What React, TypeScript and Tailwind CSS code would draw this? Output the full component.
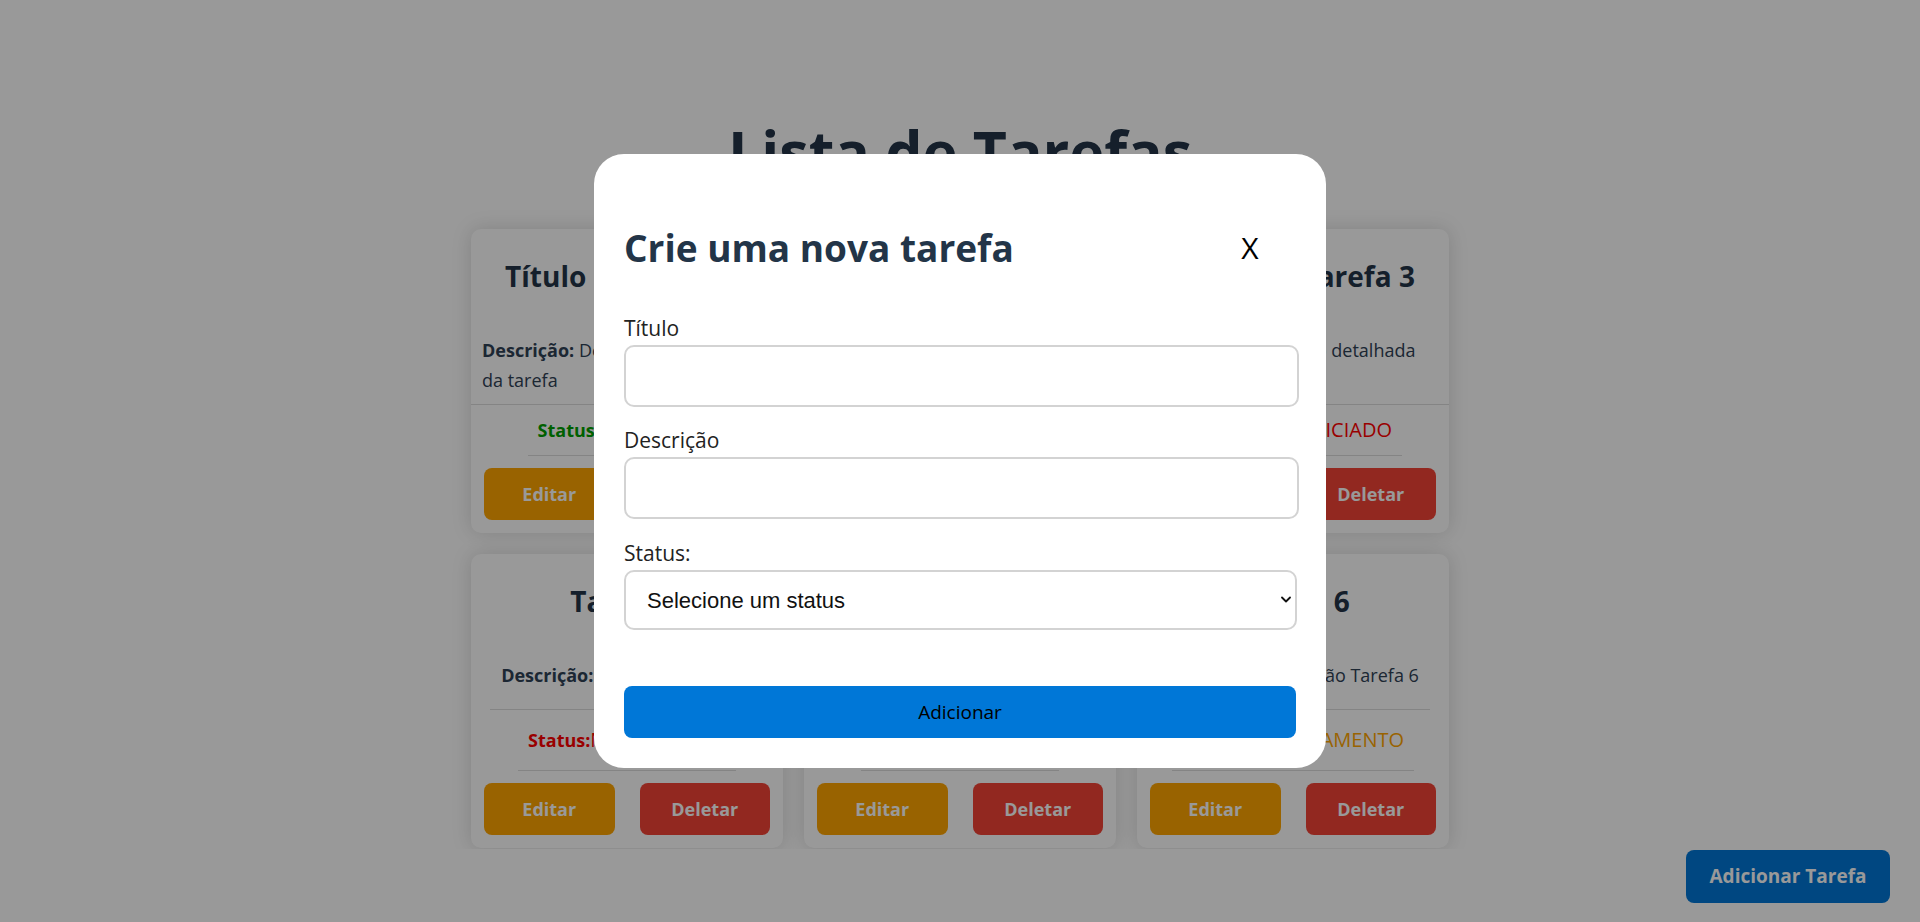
import { useState } from "react";

type Task = {
  id: number;
  title: string;
  description: string;
  status: "CONCLUÍDO" | "EM ANDAMENTO" | "NÃO INICIADO";
};

const tasks: Task[] = [
  { id: 1, title: "Título da Tarefa 1", description: "Descrição detalhada da tarefa", status: "CONCLUÍDO" },
  { id: 2, title: "Título da Tarefa 2", description: "Descrição detalhada da tarefa", status: "EM ANDAMENTO" },
  { id: 3, title: "Título da Tarefa 3", description: "Descrição detalhada da tarefa", status: "NÃO INICIADO" },
  { id: 4, title: "Tarefa 4", description: "Descrição Tarefa 4", status: "NÃO INICIADO" },
  { id: 5, title: "Tarefa 5", description: "Descrição Tarefa 5", status: "CONCLUÍDO" },
  { id: 6, title: "Tarefa 6", description: "Descrição Tarefa 6", status: "EM ANDAMENTO" },
];

const statusColor: Record<Task["status"], string> = {
  "CONCLUÍDO": "text-[#00a000]",
  "EM ANDAMENTO": "text-[#ffa500]",
  "NÃO INICIADO": "text-[#ff0000]",
};

function TaskCard({ task }: { task: Task }) {
  return (
    <div className="flex min-h-[294px] flex-col items-center rounded-[10px] bg-white pb-[13px] pt-[29px] shadow-[0_0_20px_rgba(0,0,0,0.15)]">
      <h3 className="text-center text-[28px] font-bold leading-[36px] text-[#233548]">
        {task.title}
      </h3>

      <p className="mt-[31px] grow border-b border-[#dddddd] px-[11px] pb-[9px] pt-[10px] text-[18px] leading-[30px] text-[#2f4155]">
        <strong className="font-bold">Descrição:</strong> {task.description}
      </p>

      <div
        className={
          "mt-[10px] flex grow items-center border-b border-[#dddddd] px-[10px] pb-[10px] leading-[30px] " +
          statusColor[task.status]
        }
      >
        <span className="text-[18px] font-bold">Status:</span>
        <span className="text-[20px]">{task.status}</span>
      </div>

      <div className="mt-[12px] flex w-full gap-[25px] px-[13px]">
        <button className="h-[52px] flex-1 rounded-[8px] bg-[#ffa500] text-[18px] font-bold text-white">
          Editar
        </button>
        <button className="h-[52px] flex-1 rounded-[8px] bg-[#f44336] text-[18px] font-bold text-white">
          Deletar
        </button>
      </div>
    </div>
  );
}

export default function App() {
  const [title, setTitle] = useState("");
  const [description, setDescription] = useState("");
  const [status, setStatus] = useState("");

  return (
    <div className="min-h-screen bg-white font-['Open_Sans',sans-serif]">
      <div className="flex flex-col items-center pt-[122px]">
        <h1 className="text-[59px] font-bold leading-[59px] text-[#233548]">Lista de Tarefas</h1>

        <div className="mt-[28px] h-[640px] overflow-hidden px-[20px] pt-[20px]">
          <div className="grid w-[978px] grid-cols-3 gap-[21px]">
            {tasks.map((t) => (
              <TaskCard key={t.id} task={t} />
            ))}
          </div>
        </div>
      </div>

      <button className="fixed bottom-[19px] right-[30px] h-[53px] w-[204px] rounded-[8px] bg-[#0077d7] text-[19px] font-bold text-white">
        Adicionar Tarefa
      </button>

      {/* Modal: nova tarefa */}
      <div className="fixed inset-0 z-50 flex items-center justify-center bg-black/40">
        <div className="w-[732px] rounded-[30px] bg-white px-[30px] pb-[30px] pt-[71px]">
          <div className="flex items-center justify-between">
            <h2 className="text-[37px] font-bold leading-[46px] text-[#233548]">Crie uma nova tarefa</h2>
            <button className="mr-[26px] w-[40px] text-center text-[30px] leading-[36px] text-black">X</button>
          </div>

          <div className="mt-[44px]">
            <label className="block text-[21px] leading-[26px] text-[#222222]">Título</label>
            <input
              value={title}
              onChange={(e) => setTitle(e.target.value)}
              className="mt-[4px] block h-[62px] w-[675px] rounded-[10px] border-2 border-[#d3d3d3] bg-white px-[20px] text-[20px] outline-none"
            />
          </div>

          <div className="mt-[20px]">
            <label className="block text-[21px] leading-[26px] text-[#222222]">Descrição</label>
            <input
              value={description}
              onChange={(e) => setDescription(e.target.value)}
              className="mt-[4px] block h-[62px] w-[675px] rounded-[10px] border-2 border-[#d3d3d3] bg-white px-[20px] text-[20px] outline-none"
            />
          </div>

          <div className="mt-[21px]">
            <label className="block text-[21px] leading-[26px] text-[#222222]">Status:</label>
            <div className="relative mt-[4px] w-[673px]">
              <select
                value={status}
                onChange={(e) => setStatus(e.target.value)}
                className="block h-[60px] w-full appearance-none rounded-[10px] border-2 border-[#d3d3d3] bg-white pl-[21px] font-['Liberation_Sans',Arial,sans-serif] text-[22px] text-[#111111] outline-none"
              >
                <option value="">Selecione um status</option>
                <option value="NÃO INICIADO">Não iniciado</option>
                <option value="EM ANDAMENTO">Em andamento</option>
                <option value="CONCLUÍDO">Concluído</option>
              </select>
              <svg
                className="pointer-events-none absolute right-[6px] top-[26px]"
                width="10"
                height="7"
                viewBox="0 0 10 7"
                fill="none"
              >
                <path d="M1 1.5 L5 5.5 L9 1.5" stroke="#111" strokeWidth="1.8" strokeLinecap="round" strokeLinejoin="round" />
              </svg>
            </div>
          </div>

          <button className="mt-[56px] h-[52px] w-full rounded-[8px] bg-[#0077d7] text-[19px] font-medium text-black">
            Adicionar
          </button>
        </div>
      </div>
    </div>
  );
}
